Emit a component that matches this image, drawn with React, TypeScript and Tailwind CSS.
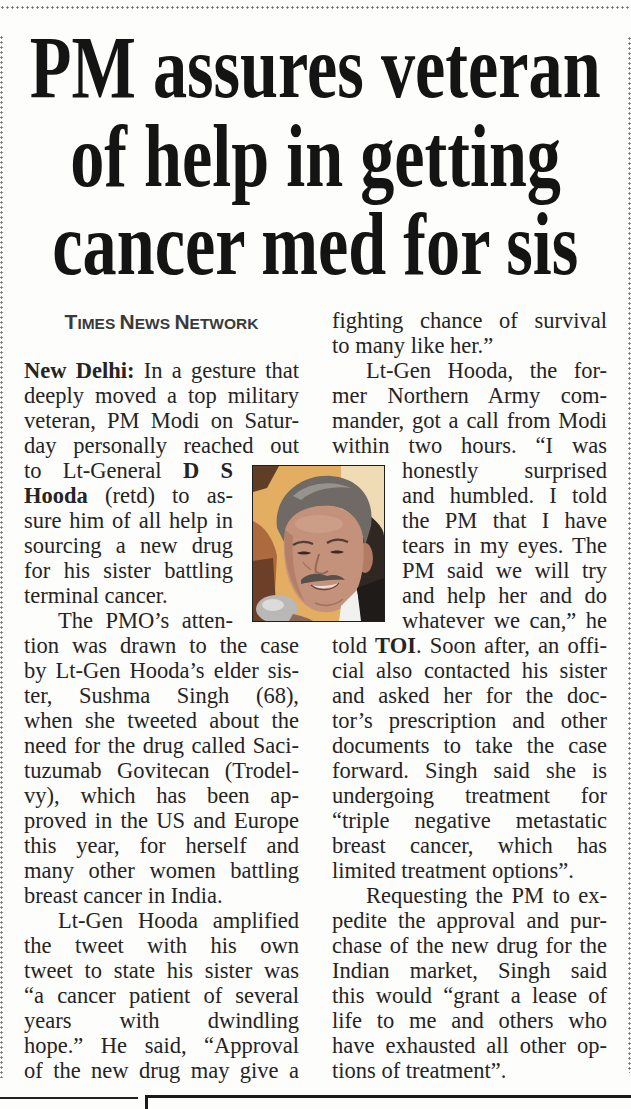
import React from 'react';

type Line = {
  t: React.ReactNode;
  last?: boolean; // last line of a paragraph: no justification
  indent?: boolean;
  narrow?: boolean; // line that runs beside the photo
};

// Colonne de gauche, ligne par ligne comme dans le journal
const leftLines: Line[] = [
  { t: <><b className="font-bold">New Delhi:</b> In a gesture that</> },
  { t: 'deeply moved a top military' },
  { t: 'veteran, PM Modi on Satur-' },
  { t: 'day personally reached out' },
  { t: <>to Lt-General <b className="font-bold">D S</b></>, narrow: true },
  { t: <><b className="font-bold">Hooda</b> (retd) to as-</>, narrow: true },
  { t: 'sure him of all help in', narrow: true },
  { t: 'sourcing a new drug', narrow: true },
  { t: 'for his sister battling', narrow: true },
  { t: 'terminal cancer.', narrow: true, last: true },
  { t: 'The PMO’s atten-', narrow: true, indent: true },
  { t: 'tion was drawn to the case' },
  { t: 'by Lt-Gen Hooda’s elder sis-' },
  { t: 'ter, Sushma Singh (68),' },
  { t: 'when she tweeted about the' },
  { t: 'need for the drug called Saci-' },
  { t: 'tuzumab Govitecan (Trodel-' },
  { t: 'vy), which has been ap-' },
  { t: 'proved in the US and Europe' },
  { t: 'this year, for herself and' },
  { t: 'many other women battling' },
  { t: 'breast cancer in India.', last: true },
  { t: 'Lt-Gen Hooda amplified', indent: true },
  { t: 'the tweet with his own' },
  { t: 'tweet to state his sister was' },
  { t: '“a cancer patient of several' },
  { t: 'years with dwindling' },
  { t: 'hope.” He said, “Approval' },
  { t: 'of the new drug may give a' },
];

const rightLines: Line[] = [
  { t: 'fighting chance of survival' },
  { t: 'to many like her.”', last: true },
  { t: 'Lt-Gen Hooda, the for-', indent: true },
  { t: 'mer Northern Army com-' },
  { t: 'mander, got a call from Modi' },
  { t: 'within two hours. “I was' },
  { t: 'honestly surprised', narrow: true },
  { t: 'and humbled. I told', narrow: true },
  { t: 'the PM that I have', narrow: true },
  { t: 'tears in my eyes. The', narrow: true },
  { t: 'PM said we will try', narrow: true },
  { t: 'and help her and do', narrow: true },
  { t: 'whatever we can,” he', narrow: true },
  { t: <>told <b className="font-bold">TOI</b>. Soon after, an offi-</> },
  { t: 'cial also contacted his sister' },
  { t: 'and asked her for the doc-' },
  { t: 'tor’s prescription and other' },
  { t: 'documents to take the case' },
  { t: 'forward. Singh said she is' },
  { t: 'undergoing treatment for' },
  { t: '“triple negative metastatic' },
  { t: 'breast cancer, which has' },
  { t: 'limited treatment options”.', last: true },
  { t: 'Requesting the PM to ex-', indent: true },
  { t: 'pedite the approval and pur-' },
  { t: 'chase of the new drug for the' },
  { t: 'Indian market, Singh said' },
  { t: 'this would “grant a lease of' },
  { t: 'life to me and others who' },
  { t: 'have exhausted all other op-' },
  { t: 'tions of treatment”.', last: true },
];

function TextLine({ line, side }: { line: Line; side: 'left' | 'right' }) {
  const align = line.last ? 'text-left' : 'text-justify [text-align-last:justify]';
  const indent = line.indent ? 'pl-[34px]' : '';
  const narrow = line.narrow ? (side === 'left' ? 'mr-[66px]' : 'ml-[70px]') : '';
  return <div className={`h-[25px] ${align} ${indent} ${narrow}`}>{line.t}</div>;
}

function Photo() {
  return (
    <div className="border border-[#1f1f1f] w-[133px] h-[157px] overflow-hidden">
      <svg viewBox="0 0 131 155" width="131" height="155" className="block">
        <rect x="0" y="0" width="131" height="155" fill="#e3ad62" />
        <rect x="88" y="0" width="43" height="70" fill="#efdcb4" />
        <path d="M0 0 H26 L14 22 L0 26 Z" fill="#5e3f25" />
        <path d="M0 55 C10 60 20 70 24 90 L22 125 L0 130 Z" fill="#ad6a3e" />
        <path d="M0 95 L20 92 L24 155 L0 155 Z" fill="#6b3f28" />
        <path d="M104 40 C118 50 131 60 131 70 L131 155 L100 155 Z" fill="#2e2722" />
        {/* hair */}
        <path d="M24 62 C20 30 48 8 78 10 C104 12 122 30 118 60 L112 80 C108 56 98 42 78 40 C56 38 38 46 32 78 Z" fill="#6f6a65" />
        <path d="M40 30 C55 16 80 14 98 22 C84 20 62 22 48 34 Z" fill="#97928c" />
        {/* ear */}
        <ellipse cx="112" cy="92" rx="8" ry="15" fill="#b27c62" />
        {/* face */}
        <path d="M32 64 C28 92 34 124 54 140 C68 150 86 148 98 134 C110 118 112 94 110 70 C106 50 92 40 72 40 C52 40 36 48 32 64 Z" fill="#c4917a" />
        <ellipse cx="66" cy="58" rx="24" ry="9" fill="#d3a690" opacity="0.6" />
        <path d="M32 64 C30 92 36 120 52 136 C42 118 38 96 40 70 Z" fill="#a9735c" opacity="0.6" />
        {/* brows and eyes */}
        <path d="M40 79 C46 75 54 75 60 78" stroke="#4f3f37" strokeWidth="2.2" fill="none" />
        <path d="M74 77 C80 73 88 73 95 76" stroke="#4f3f37" strokeWidth="2.2" fill="none" />
        <path d="M44 87 C48 85 54 85 58 87 C54 89 48 89 44 87 Z" fill="#3a2a22" />
        <path d="M77 86 C81 84 87 84 91 86 C87 88 81 88 77 86 Z" fill="#3a2a22" />
        <path d="M66 88 C64 97 61 102 63 106 C67 108 72 108 75 105" stroke="#94654f" strokeWidth="1.8" fill="none" />
        <path d="M50 96 C52 100 56 102 58 104" stroke="#a8715b" strokeWidth="1.4" fill="none" />
        {/* moustache and mouth */}
        <path d="M48 114 C54 107 66 106 74 110 C80 108 88 109 92 114 C82 113 62 115 48 118 Z" fill="#57504b" />
        <path d="M58 119 C66 121 78 120 86 117 C80 123 66 124 58 119 Z" fill="#e6e1d8" />
        <path d="M58 119 C66 126 80 125 86 117" stroke="#6e3f34" strokeWidth="1.2" fill="none" />
        <path d="M62 137 C70 141 82 140 90 133" stroke="#a27360" strokeWidth="1.6" fill="none" />
        {/* collar and suit */}
        <path d="M88 140 L104 124 L110 155 L86 155 Z" fill="#f1f1ee" />
        <path d="M104 122 L131 112 L131 155 L108 155 Z" fill="#1f1b19" />
        {/* microphone */}
        <ellipse cx="24" cy="143" rx="21" ry="14" fill="#b9b8b6" />
        <ellipse cx="20" cy="139" rx="11" ry="6" fill="#dcdbd8" />
        <path d="M40 148 C48 150 56 152 60 155 L36 155 Z" fill="#8c6a58" />
      </svg>
    </div>
  );
}

export default function App() {
  const dotsH = 'h-[3px] bg-[radial-gradient(circle,#6f6f6f_0.9px,transparent_1.3px)] bg-[length:5px_3px]';
  const dotsV = 'w-[3px] bg-[radial-gradient(circle,#6f6f6f_0.9px,transparent_1.3px)] bg-[length:3px_5px]';

  return (
    <div className="w-[631px] h-[1109px] bg-[#fdfdfb] flex flex-col overflow-hidden font-['Liberation_Serif',serif] text-[#242424]">
      {/* top dotted rule */}
      <div className={`mt-[6px] w-full ${dotsH}`} />

      <div className="flex h-[1086px]">
        <div className={`mt-[26px] mb-[17px] ${dotsV}`} />

        <div className="flex-1 min-w-0 pt-[15px] px-[21px]">
          {/* Headline */}
          <div className="flex flex-col items-center text-[88px] leading-[88.5px] font-bold text-[#141414]">
            <div className="w-max shrink-0 whitespace-nowrap scale-x-[0.775]">PM assures veteran</div>
            <div className="w-max shrink-0 whitespace-nowrap scale-x-[0.775]">of help in getting</div>
            <div className="w-max shrink-0 whitespace-nowrap scale-x-[0.775]">cancer med for sis</div>
          </div>

          {/* Columns */}
          <div className="relative mt-[18.5px] grid grid-cols-[275px_275px] gap-x-[33px] text-[22.5px] leading-[25px]">
            <div>
              <div className="h-[50px] pt-[3px] text-center leading-[22px] font-['Liberation_Sans',sans-serif] font-bold text-[#3a3a3a]">
                <span className="text-[21px]">T</span>
                <span className="text-[15.5px]">IMES </span>
                <span className="text-[21px]">N</span>
                <span className="text-[15.5px]">EWS </span>
                <span className="text-[21px]">N</span>
                <span className="text-[15.5px]">ETWORK</span>
              </div>
              {leftLines.map((line, i) => (
                <TextLine key={i} line={line} side="left" />
              ))}
            </div>
            <div>
              {rightLines.map((line, i) => (
                <TextLine key={i} line={line} side="right" />
              ))}
            </div>

            {/* inset photo */}
            <div className="absolute left-[228px] top-[157px]">
              <Photo />
            </div>
          </div>
        </div>

        <div className={`mt-[27px] mb-[22px] ${dotsV}`} />
      </div>

      {/* bottom rules */}
      <div className="flex items-start h-[14px]">
        <div className="w-[138px] h-[2px] mt-[2px] bg-[#222]" />
        <div className="ml-[7px] flex-1 h-full border-l-[3px] border-t-[3px] border-[#1a1a1a]" />
      </div>
    </div>
  );
}
